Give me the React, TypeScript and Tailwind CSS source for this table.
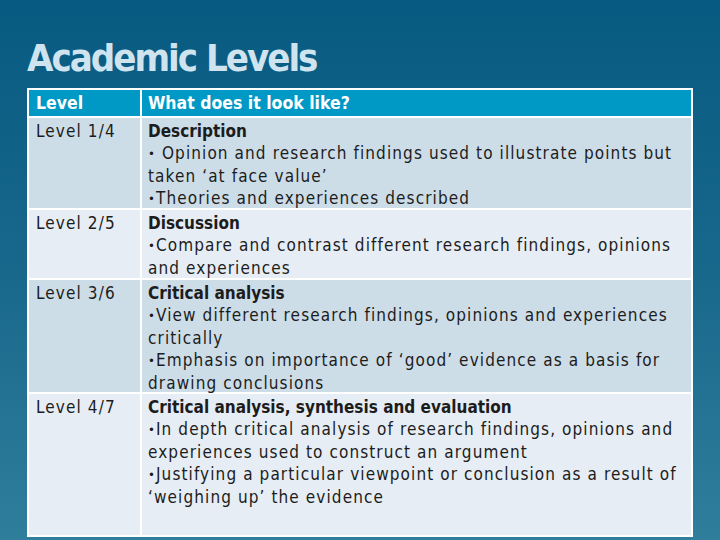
import React from "react";

const font = { fontFamily: '"DejaVu Sans Condensed", "DejaVu Sans", sans-serif' };

const B = () => <span className="text-[13px] align-[1px]">•</span>;

type Row = { level: string; title: string; lines: React.ReactNode[]; bg: string; h: string };

const rows: Row[] = [
  {
    level: "Level 1/4",
    title: "Description",
    lines: [
      <><B /> Opinion and research findings used to illustrate points but</>,
      <>taken ‘at face value’</>,
      <><B />Theories and experiences described</>,
    ],
    bg: "bg-[#cddde8]",
    h: "h-[92px]",
  },
  {
    level: "Level 2/5",
    title: "Discussion",
    lines: [
      <><B />Compare and contrast different research findings, opinions</>,
      <>and experiences</>,
    ],
    bg: "bg-[#e6edf4]",
    h: "h-[70px]",
  },
  {
    level: "Level 3/6",
    title: "Critical analysis",
    lines: [
      <><B />View different research findings, opinions and experiences</>,
      <>critically</>,
      <><B />Emphasis on importance of ‘good’ evidence as a basis for</>,
      <>drawing conclusions</>,
    ],
    bg: "bg-[#cddde8]",
    h: "h-[114px]",
  },
  {
    level: "Level 4/7",
    title: "Critical analysis, synthesis and evaluation",
    lines: [
      <><B />In depth critical analysis of research findings, opinions and</>,
      <>experiences used to construct an argument</>,
      <><B />Justifying a particular viewpoint or conclusion as a result of</>,
      <>‘weighing up’ the evidence</>,
    ],
    bg: "bg-[#e6edf4]",
    h: "flex-1",
  },
];

export default function App() {
  return (
    <div
      className="w-[720px] h-[540px] bg-gradient-to-b from-[#075a81] via-[#18688c] to-[#2f7e9c] flex flex-col overflow-hidden"
      style={font}
    >
      <h1 className="ml-[27px] mt-[36px] h-[52px] text-[38px] font-bold leading-[44px] text-[#cfe4ef] tracking-[-2px]">
        Academic Levels
      </h1>
      <div className="ml-[27px] w-[666px] h-[449px] border-2 border-white flex flex-col text-[17px] leading-[22px] text-[#1c1c1c]">
        <div className="h-[28px] flex bg-[#0098c5] text-white font-bold text-[17.5px] border-b-2 border-white">
          <div className="w-[111px] pl-[7px] pt-[2px]">Level</div>
          <div className="flex-1 border-l-2 border-white pl-[6px] pt-[2px]">What does it look like?</div>
        </div>
        {rows.map((r, i) => (
          <div
            key={r.level}
            className={`flex ${r.bg} ${r.h} ${i < rows.length - 1 ? "border-b-2 border-white" : ""}`}
          >
            <div className="w-[111px] pl-[7px] pt-[2px] tracking-[1.1px]">{r.level}</div>
            <div className="flex-1 border-l-2 border-white pl-[6px] pt-[2px]">
              <div className="font-bold">{r.title}</div>
              {r.lines.map((l, j) => (
                <div key={j} className="whitespace-nowrap tracking-[1.1px]">{l}</div>
              ))}
            </div>
          </div>
        ))}
      </div>
    </div>
  );
}
